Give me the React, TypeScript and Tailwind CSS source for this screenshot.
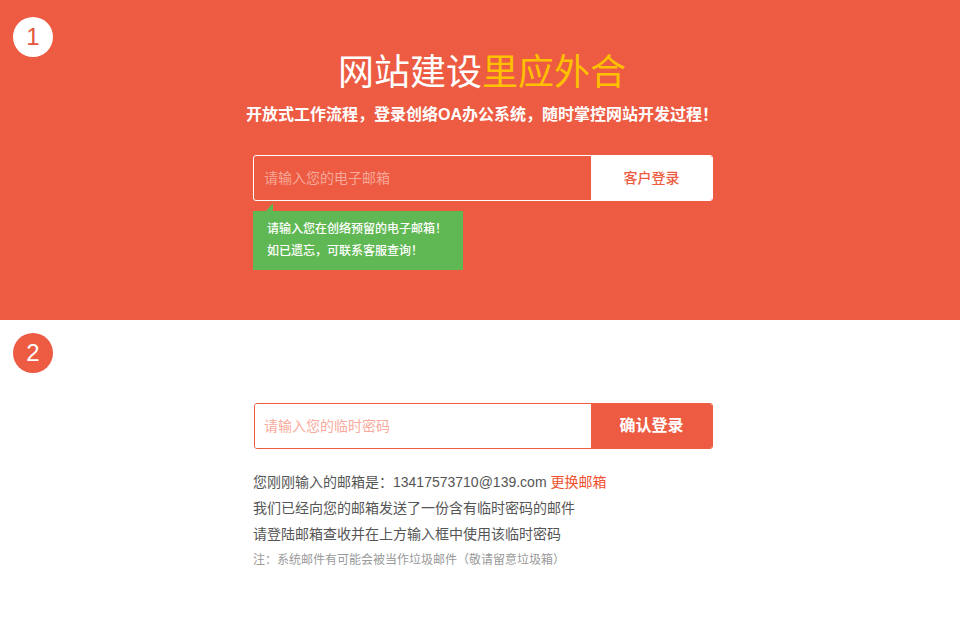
const font = "font-['Liberation_Sans','Noto_Sans_CJK_SC',sans-serif]"

const StepBadge = ({ n, light }: { n: number; light?: boolean }) => (
  <div
    className={
      light
        ? "absolute left-[13px] top-[17px] w-[40px] h-[40px] rounded-full bg-white text-[#e4553c] flex items-center justify-center text-[24px] font-light"
        : "absolute left-[13px] top-[333px] w-[40px] h-[40px] rounded-full bg-[#ec5b42] text-white flex items-center justify-center text-[24px] font-light"
    }
  >
    {n}
  </div>
)

export default function App() {
  return (
    <div className={`relative w-[960px] h-[640px] bg-white ${font}`}>
      {/* 第一步 */}
      <section className="h-[320px] bg-[#ec5b42] pt-[51px]">
        <h1 className="text-center text-[36px] leading-[44px] text-white font-normal pl-[4px]">
          网站建设<span className="text-[#ffc000]">里应外合</span>
        </h1>
        <p className="mt-[8px] text-center text-[16px] leading-[24px] text-white font-semibold pl-[4px]">
          开放式工作流程，登录创络OA办公系统，随时掌控网站开发过程！
        </p>

        <div className="w-[466px] mx-auto pl-[6px] mt-[28px]">
          <div className="flex h-[46px] border border-white rounded-[3px] overflow-hidden">
            <input
              className="flex-1 min-w-0 bg-transparent outline-none px-[10px] text-[14px] text-white placeholder:text-[#f7a898]"
              placeholder="请输入您的电子邮箱"
            />
            <button className="w-[121px] bg-white text-[#ec5b42] text-[14px] font-medium">客户登录</button>
          </div>

          <div className="relative mt-[10px] w-[210px] bg-[#5fb853] pl-[14px] pt-[7px] pb-[8px] text-white text-[12px] leading-[22px] font-medium">
            <svg className="absolute left-[13px] -top-[8px]" width="7" height="8" viewBox="0 0 7 8">
              <polygon points="0,8 7,0 7,8" fill="#5fb853" />
            </svg>
            <p>请输入您在创络预留的电子邮箱！</p>
            <p>如已遗忘，可联系客服查询！</p>
          </div>
        </div>
      </section>

      {/* 第二步 */}
      <section className="pt-[83px]">
        <div className="w-[466px] mx-auto pl-[6px]">
          <div className="flex h-[46px] border border-[#ec5b42] rounded-[3px] overflow-hidden ml-[1px]">
            <input
              className="flex-1 min-w-0 bg-white outline-none px-[9px] text-[14px] text-[#555] placeholder:text-[#f8ab9d]"
              placeholder="请输入您的临时密码"
            />
            <button className="w-[121px] bg-[#ec5b42] text-white text-[16px] font-semibold">确认登录</button>
          </div>

          <div className="mt-[20px] text-[14px] leading-[26px] text-[#555]">
            <p>
              您刚刚输入的邮箱是：13417573710@139.com{" "}
              <a href="#" className="text-[#f0502e]">更换邮箱</a>
            </p>
            <p>我们已经向您的邮箱发送了一份含有临时密码的邮件</p>
            <p>请登陆邮箱查收并在上方输入框中使用该临时密码</p>
            <p className="text-[12px] text-[#999]">注：系统邮件有可能会被当作垃圾邮件（敬请留意垃圾箱）</p>
          </div>
        </div>
      </section>

      <StepBadge n={1} light />
      <StepBadge n={2} />
    </div>
  )
}
